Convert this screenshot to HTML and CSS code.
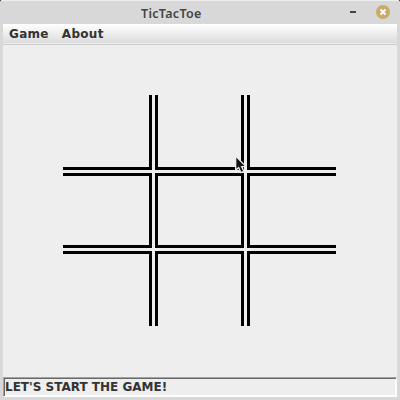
FILE: index.html
```html
<!DOCTYPE html>
<html lang="en">
<head>
<meta charset="utf-8">
<title>TicTacToe</title>
<link rel="stylesheet" href="styles.css">
</head>
<body>
<div class="window">
  <header class="titlebar">
    <h1 class="title">TicTacToe</h1>
    <span class="minimize"></span>
    <svg class="close" width="14" height="14" viewBox="0 0 14 14"><circle cx="7" cy="7" r="7" fill="#c8ab69"/><path d="M4.5 4.5l5 5M9.5 4.5l-5 5" stroke="#fff" stroke-width="2"/></svg>
  </header>
  <nav class="menubar"><span>Game</span><span>About</span></nav>
  <main class="content">
    <div class="board">
      <div class="cell right bottom"></div><div class="cell left right bottom"></div><div class="cell left bottom"></div>
      <div class="cell top right bottom"></div><div class="cell top left right bottom"></div><div class="cell top left bottom"></div>
      <div class="cell top right"></div><div class="cell top left right"></div><div class="cell top left"></div>
    </div>
  </main>
  <footer class="status">LET'S START THE GAME!</footer>
  <svg class="pointer" width="12" height="20" viewBox="0 0 12 20"><path d="M.7 1v14.2l3-2.7 2.2 5.2 3-1.3-2.2-4.8h4.3z" fill="#111" stroke="#eee" stroke-width="1.3"/></svg>
</div>
</body>
</html>
```
FILE: styles.css
```css
* { box-sizing: border-box; }
body { margin: 0; background: #000; }
.window {
  position: relative;
  display: flex;
  flex-direction: column;
  width: 400px;
  height: 400px;
  padding: 0 3px 3px;
  background: #d8d8d8;
  border-top: 1px solid #eee;
  border-radius: 2px 2px 0 0;
  font: bold 12px/19px "DejaVu Sans", sans-serif;
  color: #333;
}
.titlebar {
  display: flex;
  align-items: center;
  height: 23px;
  padding: 0 7px 1px 0;
}
.title {
  flex: 1;
  margin: 3px 0 0 138px;
  font: 600 12.5px/20px "Noto Sans", sans-serif;
  letter-spacing: 0.3px;
  color: #444;
}
.minimize {
  width: 6px;
  height: 2px;
  margin: 0 20px 1px 0;
  background: #444;
}
.menubar {
  display: flex;
  gap: 13px;
  height: 21px;
  padding: 1px 0 0 6px;
  letter-spacing: 0.3px;
  background: linear-gradient(#fff, #dadada);
  border-bottom: 1px solid #ccc;
  box-shadow: inset 0 -1px #eee;
}
.content {
  flex: 1;
  padding: 50px 60px;
  background: #eee;
}
.board {
  display: grid;
  grid-template-columns: repeat(3, 89px);
  grid-template-rows: repeat(3, 75px);
  gap: 3px;
}
.cell { border: 0 solid #000; }
.top { border-top-width: 3px; }
.right { border-right-width: 3px; }
.bottom { border-bottom-width: 3px; }
.left { border-left-width: 3px; }
.status {
  height: 20px;
  padding: 1px;
  line-height: 16px;
  background: #eee;
  border: 1px solid;
  border-color: #a3a3a3 #fff #fff #a3a3a3;
  box-shadow: inset 1px 1px #686868, inset -1px -1px #fff;
}
.pointer { position: absolute; left: 235px; top: 154px; }
```
